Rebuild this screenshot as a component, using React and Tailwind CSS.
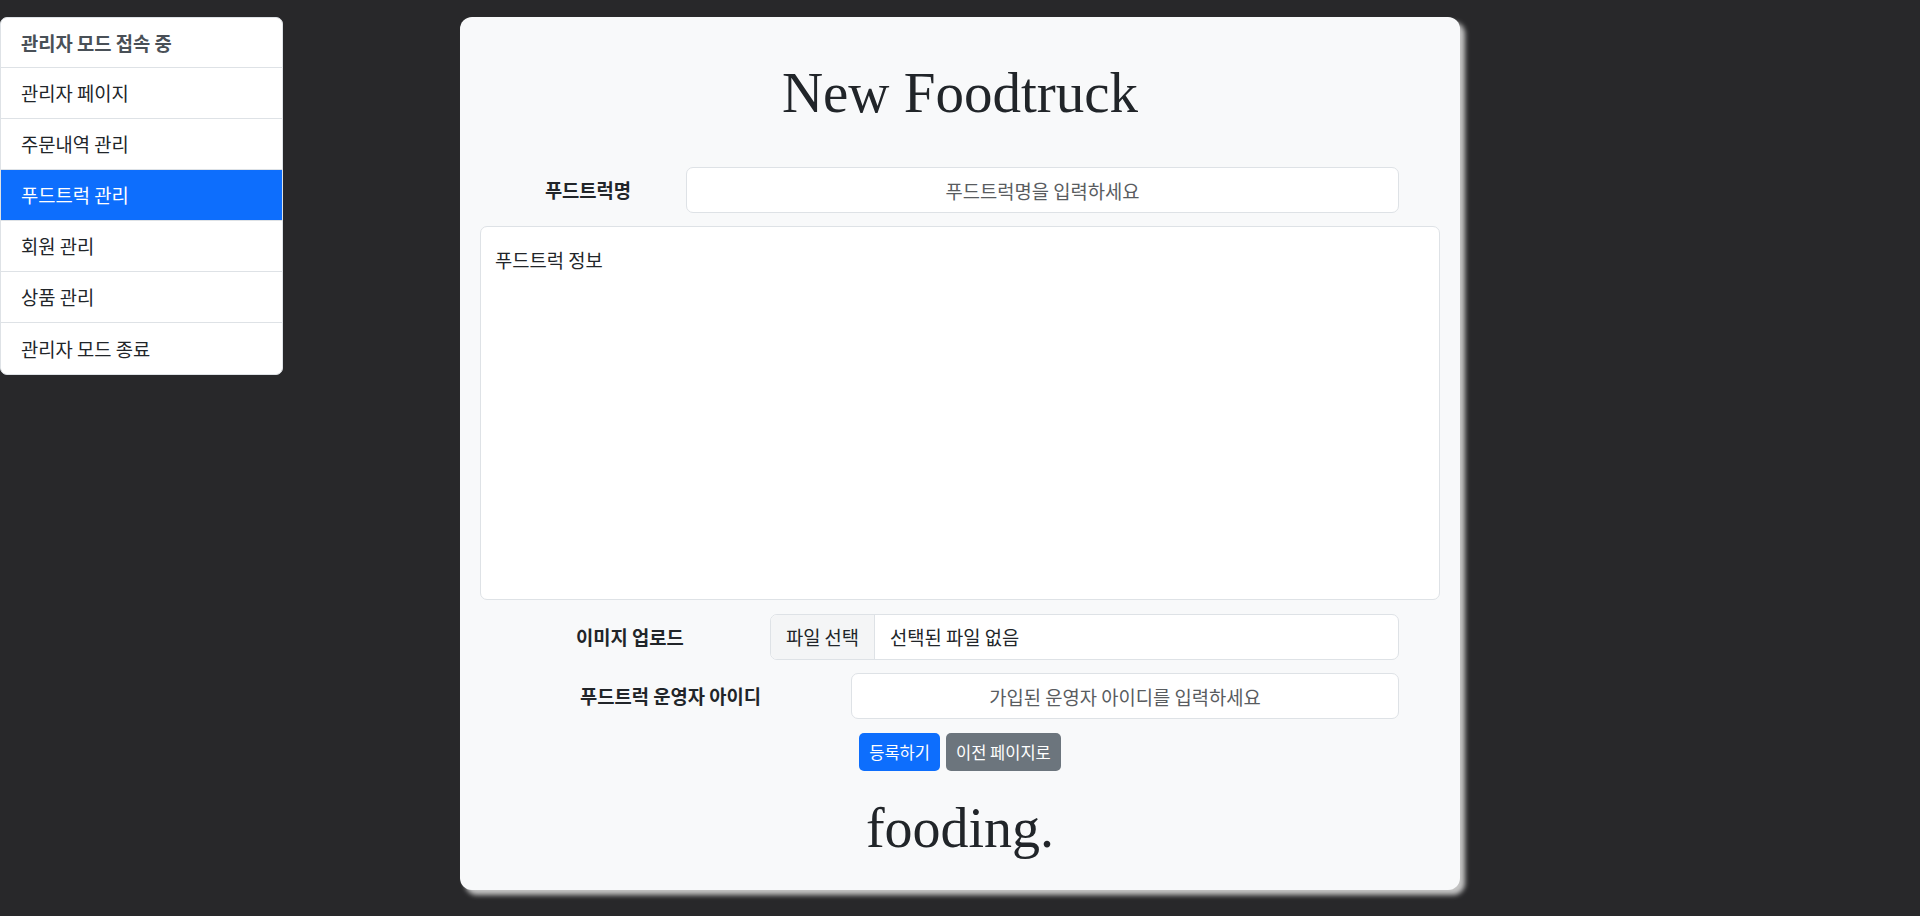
const menu = [
  { label: '관리자 페이지' },
  { label: '주문내역 관리' },
  { label: '푸드트럭 관리', active: true },
  { label: '회원 관리' },
  { label: '상품 관리' },
  { label: '관리자 모드 종료' },
];

function Sidebar() {
  return (
    <div className="w-[283px] bg-white rounded-[7px] overflow-hidden border border-[#dee2e6]">
      <div className="h-[50px] px-[20px] flex items-center font-semibold text-[#495057] border-b border-[#dee2e6]">
        관리자 모드 접속 중
      </div>
      {menu.map((m, i) => (
        <div
          key={m.label}
          className={
            (m.active ? 'bg-[#0d6efd] text-white ' : 'text-[#212529] ') +
            (i < menu.length - 1 ? 'border-b border-[#dee2e6] ' : '') +
            'h-[51px] px-[20px] flex items-center'
          }
        >
          {m.label}
        </div>
      ))}
    </div>
  );
}

function FieldRow({ label, labelWidth, children }) {
  return (
    <div className="flex items-center ml-[10px] mr-[41px]">
      <label className={labelWidth + ' shrink-0 text-center font-bold text-[#212529]'}>{label}</label>
      {children}
    </div>
  );
}

export default function App() {
  return (
    <div className="min-h-screen bg-[#28282a] font-['Noto_Sans_CJK_KR','Noto_Sans',sans-serif] text-[18.75px] leading-[30px]">
      <div className="grid grid-cols-[1fr_1000px_1fr] pt-[17px] pb-[26px]">
        <div>
          <Sidebar />
        </div>

        <div className="bg-[#f8f9fa] rounded-[12px] h-[873px] px-[20px] shadow-[5px_5px_5px_#c4c4c4]">
          <h1 className="pt-[42px] text-center font-['Liberation_Serif',serif] text-[57px] leading-[68px] text-[#212529]">
            New Foodtruck
          </h1>

          <div className="mt-[40px]">
            <FieldRow label="푸드트럭명" labelWidth="w-[196px]">
              <input
                type="text"
                placeholder="푸드트럭명을 입력하세요"
                className="flex-1 h-[46px] bg-white border border-[#dee2e6] rounded-[7px] px-[15px] text-center outline-none placeholder:text-[#595c5f]"
              />
            </FieldRow>
          </div>

          <textarea
            defaultValue="푸드트럭 정보"
            className="mt-[13px] block w-full h-[374px] bg-white border border-[#dee2e6] rounded-[7px] pl-[14px] pt-[18px] text-[#212529] resize-none outline-none"
          />

          <div className="mt-[14px]">
            <FieldRow label="이미지 업로드" labelWidth="w-[280px]">
              <div className="flex-1 h-[46px] flex bg-white border border-[#dee2e6] rounded-[7px] overflow-hidden">
                <span className="w-[104px] shrink-0 bg-[#f4f5f6] border-r border-[#dee2e6] flex items-center justify-center text-[#212529]">
                  파일 선택
                </span>
                <span className="pl-[15px] flex items-center text-[#212529]">선택된 파일 없음</span>
              </div>
            </FieldRow>
          </div>

          <div className="mt-[13px]">
            <FieldRow label="푸드트럭 운영자 아이디" labelWidth="w-[361px]">
              <input
                type="text"
                placeholder="가입된 운영자 아이디를 입력하세요"
                className="flex-1 h-[46px] bg-white border border-[#dee2e6] rounded-[7px] px-[15px] text-center outline-none placeholder:text-[#595c5f]"
              />
            </FieldRow>
          </div>

          <div className="mt-[14px] flex justify-center gap-[6px]">
            <button type="button" className="h-[38px] px-[10px] rounded-[5px] bg-[#0d6efd] text-white text-[16.5px] leading-[24px]">
              등록하기
            </button>
            <button type="button" className="h-[38px] px-[10px] rounded-[5px] bg-[#6c757d] text-white text-[16.5px] leading-[24px]">
              이전 페이지로
            </button>
          </div>

          <div className="mt-[24px] text-center font-['Liberation_Serif',serif] text-[56px] leading-[67px] text-[#212529]">
            fooding.
          </div>
        </div>

        <div />
      </div>
    </div>
  );
}
